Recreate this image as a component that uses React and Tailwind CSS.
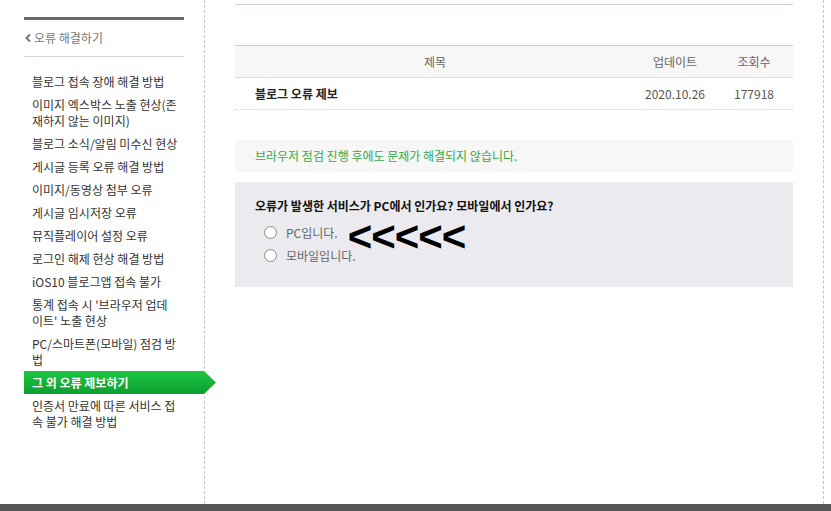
const menu = [
  ['블로그 접속 장애 해결 방법'],
  ['이미지 엑스박스 노출 현상(존', '재하지 않는 이미지)'],
  ['블로그 소식/알림 미수신 현상'],
  ['게시글 등록 오류 해결 방법'],
  ['이미지/동영상 첨부 오류'],
  ['게시글 임시저장 오류'],
  ['뮤직플레이어 설정 오류'],
  ['로그인 해제 현상 해결 방법'],
  ['iOS10 블로그앱 접속 불가'],
  ["통계 접속 시 '브라우저 업데", "이트' 노출 현상"],
  ['PC/스마트폰(모바일) 점검 방', '법'],
  ['그 외 오류 제보하기'],
  ['인증서 만료에 따른 서비스 접', '속 불가 해결 방법'],
]

const ACTIVE = 11

// Left help menu
function Sidebar() {
  return (
    <div className="w-[205px] shrink-0 border-r border-dashed border-[#c4c4c4] pt-[17px]">
      <div className="ml-[24px] w-[160px]">
        <div className="h-[3px] bg-[#6a6a6a]" />
        <div className="flex h-[36px] items-center text-[12px] text-[#777]">
          <svg width="8" height="10" viewBox="0 0 8 10" className="mr-[2px]">
            <path d="M6 1.5 L2.5 5 L6 8.5" fill="none" stroke="#777" strokeWidth="2" />
          </svg>
          오류 해결하기
        </div>
        <div className="h-px bg-[#d3d8e0]" />
      </div>

      <ul className="ml-[24px] mt-[13px]">
        {menu.map((lines, i) =>
          i === ACTIVE ? (
            <li
              key={i}
              className="relative z-10 w-[192px] bg-gradient-to-b from-[#1dc640] to-[#0c9f30] py-[3.5px] pl-[8px] text-[12px] font-bold leading-[16px] text-white [clip-path:polygon(0_0,calc(100%_-_12px)_0,100%_50%,calc(100%_-_12px)_100%,0_100%)]"
            >
              {lines[0]}
            </li>
          ) : (
            <li key={i} className="py-[3.5px] pl-[8px] text-[12px] leading-[16px] text-[#333]">
              {lines.map((l, j) => (
                <div key={j} className="whitespace-nowrap">{l}</div>
              ))}
            </li>
          )
        )}
      </ul>
    </div>
  )
}

function Radio({ label }) {
  return (
    <label className="flex h-[23px] items-center pl-[29px] text-[12px] text-[#666]">
      <span className="h-[13px] w-[13px] rounded-full border border-[#8a8a8a] bg-white" />
      <span className="ml-[9px]">{label}</span>
    </label>
  )
}

function Content() {
  return (
    <div className="w-[619px] shrink-0 border-r border-dashed border-[#c4c4c4] px-[30px]">
      <div className="mt-[4px] border-t border-[#c9d1c9]" />

      {/* table */}
      <div className="mt-[40px] text-[12px]">
        <div className="flex h-[33px] items-center border-y border-t-[#c9d1c9] border-b-[#dcdcdc] bg-[#f7f7f8] text-[#666]">
          <div className="w-[400px] text-center">제목</div>
          <div className="w-[80px] text-center">업데이트</div>
          <div className="w-[78px] text-center">조회수</div>
        </div>
        <div className="flex h-[32px] items-center border-b border-dotted border-[#cfcfcf] text-[#555]">
          <div className="w-[400px] pl-[20px] font-bold text-[#222]">블로그 오류 제보</div>
          <div className="w-[80px] text-center">2020.10.26</div>
          <div className="w-[78px] text-center">177918</div>
        </div>
      </div>

      <div className="mt-[30px] flex h-[32px] items-center bg-[#f7f7f8] pl-[20px] text-[12px] text-[#34a844]">
        브라우저 점검 진행 후에도 문제가 해결되지 않습니다.
      </div>

      <div className="mt-[10px] h-[105px] bg-[#ebebef] pt-[16px]">
        <div className="pl-[20px] text-[12px] font-bold leading-[16px] text-[#111]">
          오류가 발생한 서비스가 PC에서 인가요? 모바일에서 인가요?
        </div>
        <div className="mt-[7px]">
          <div className="flex items-start">
            <Radio label="PC입니다." />
            <div className="ml-[10px] h-[23px]">
              <span className="block font-['Liberation_Sans',sans-serif] text-[42px] font-bold leading-[31px] tracking-[-1px] text-black">
                &lt;&lt;&lt;&lt;&lt;
              </span>
            </div>
          </div>
          <Radio label="모바일입니다." />
        </div>
      </div>
    </div>
  )
}

export default function App() {
  return (
    <div className="flex h-[511px] w-[831px] flex-col overflow-hidden bg-white font-['Noto_Sans_CJK_KR',sans-serif]">
      <div className="flex flex-1">
        <Sidebar />
        <Content />
      </div>
      <div className="h-[7px] bg-[#555]" />
    </div>
  )
}
